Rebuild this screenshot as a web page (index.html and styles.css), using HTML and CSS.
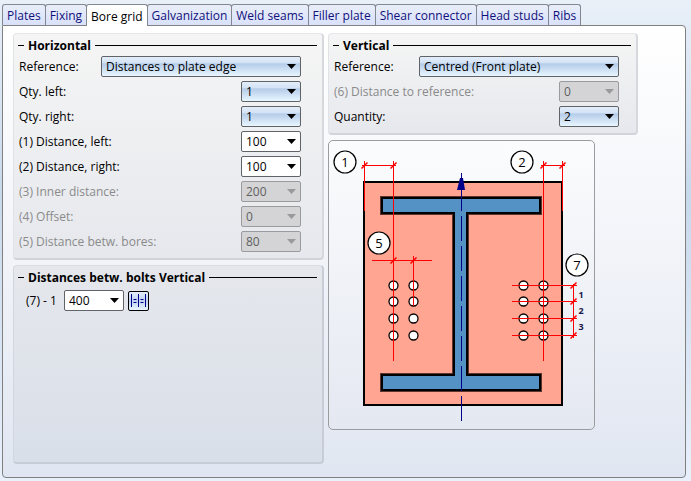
FILE: index.html
```html
<!DOCTYPE html>
<html lang="en">
<head>
<meta charset="utf-8">
<title>Bore grid</title>
<link rel="stylesheet" href="styles.css">
</head>
<body>
<nav class="tabs" role="tablist">
  <button class="tab" role="tab">Plates</button>
  <button class="tab" role="tab">Fixing</button>
  <button class="tab tab-active" role="tab" aria-selected="true">Bore grid</button>
  <button class="tab" role="tab">Galvanization</button>
  <button class="tab" role="tab">Weld seams</button>
  <button class="tab" role="tab">Filler plate</button>
  <button class="tab" role="tab">Shear connector</button>
  <button class="tab" role="tab">Head studs</button>
  <button class="tab" role="tab">Ribs</button>
</nav>
<main class="panel">
  <div class="column">
    <section class="group">
      <h2 class="heading">Horizontal</h2>
      <div class="rows">
        <div class="row"><label for="h-ref">Reference:</label><span class="combo combo-wide"><select id="h-ref"><option>Distances to plate edge</option></select></span></div>
        <div class="row"><label for="qty-left">Qty. left:</label><span class="combo"><select id="qty-left"><option>1</option></select></span></div>
        <div class="row"><label for="qty-right">Qty. right:</label><span class="combo"><select id="qty-right"><option>1</option></select></span></div>
        <div class="row"><label for="dist-left">(1) Distance, left:</label><span class="combo combo-edit"><select id="dist-left"><option>100</option></select></span></div>
        <div class="row"><label for="dist-right">(2) Distance, right:</label><span class="combo combo-edit"><select id="dist-right"><option>100</option></select></span></div>
        <div class="row row-off"><label for="inner">(3) Inner distance:</label><span class="combo"><select id="inner" disabled><option>200</option></select></span></div>
        <div class="row row-off"><label for="offset">(4) Offset:</label><span class="combo"><select id="offset" disabled><option>0</option></select></span></div>
        <div class="row row-off"><label for="bores">(5) Distance betw. bores:</label><span class="combo"><select id="bores" disabled><option>80</option></select></span></div>
      </div>
    </section>
    <section class="group group-fill">
      <h2 class="heading">Distances betw. bolts Vertical</h2>
      <div class="bolt">
        <label for="bolt-1">(7) - 1</label>
        <span class="combo combo-edit"><select id="bolt-1"><option>400</option></select></span>
        <button class="equal" aria-label="Equal distances">
          <svg width="17" height="15" viewBox="0 0 17 15" fill="none" stroke="#00008b">
            <path d="M1.5 1v13M8.500 1v13M15.500 1v13M3.500 6.500h3M3.500 9.500h3M10.500 6.500h3M10.500 9.500h3"/>
          </svg>
        </button>
      </div>
    </section>
  </div>
  <div class="column">
    <section class="group">
      <h2 class="heading">Vertical</h2>
      <div class="rows rows-vertical">
        <div class="row"><label for="v-ref">Reference:</label><span class="combo combo-wide"><select id="v-ref"><option>Centred (Front plate)</option></select></span></div>
        <div class="row row-off"><label for="v-dist">(6) Distance to reference:</label><span class="combo"><select id="v-dist" disabled><option>0</option></select></span></div>
        <div class="row"><label for="quantity">Quantity:</label><span class="combo"><select id="quantity"><option>2</option></select></span></div>
      </div>
    </section>
    <figure class="drawing">
      <svg width="265" height="288" viewBox="329 141 265 288" role="img" aria-label="Plate with bore grid">
        <rect x="364" y="182" width="198" height="223" fill="#ffa591" stroke="#000" stroke-width="2"/>
        <path d="M382 198H540V213H467V375H540V390H382V375H454V213H382Z" fill="#5492c5" stroke="#5b342d" stroke-width="4"/>
        <path d="M382 198H540V213H467V375H540V390H382V375H454V213H382Z" fill="#5492c5" stroke="#000" stroke-width="2"/>
        <path d="M461.500 173v13" stroke="#00008b"/>
        <path d="M461.500 186V421" stroke="#00008b" stroke-dasharray="25 5"/>
        <path d="M460 178h3l2 12h-8z" fill="#00008b"/>
        <g fill="#fff" stroke="#000" stroke-width="1.300">
          <circle cx="393.500" cy="285.500" r="4.500"/><circle cx="393.500" cy="301.500" r="4.500"/><circle cx="393.500" cy="318.500" r="4.500"/><circle cx="393.500" cy="335.500" r="4.500"/>
          <circle cx="413.500" cy="285.500" r="4.500"/><circle cx="413.500" cy="301.500" r="4.500"/><circle cx="413.500" cy="318.500" r="4.500"/><circle cx="413.500" cy="335.500" r="4.500"/>
          <circle cx="523.500" cy="285.500" r="4.500"/><circle cx="523.500" cy="301.500" r="4.500"/><circle cx="523.500" cy="318.500" r="4.500"/><circle cx="523.500" cy="335.500" r="4.500"/>
          <circle cx="543.500" cy="285.500" r="4.500"/><circle cx="543.500" cy="301.500" r="4.500"/><circle cx="543.500" cy="318.500" r="4.500"/><circle cx="543.500" cy="335.500" r="4.500"/>
        </g>
        <g stroke="#f00" fill="none">
          <path d="M364.500 161v50M393.500 161v200M543.500 161v200M562.500 161v50M413.500 256v50M573.500 284v54"/>
          <path d="M362 165.500h34M541 165.500h24M372 260.500h60M512 285.500h65M512 301.500h65M512 318.500h65M512 335.500h65"/>
          <path stroke-width="1.500" d="M361.500 168.500l6-6M390.500 168.500l6-6M540.500 168.500l6-6M559.500 168.500l6-6M390.500 263.500l6-6M410.500 263.500l6-6M570.500 288.500l6-6M570.500 304.500l6-6M570.500 321.500l6-6M570.500 338.500l6-6"/>
        </g>
        <g fill="#fff" stroke="#000" stroke-width="1.200">
          <circle cx="345" cy="162" r="11"/><circle cx="522" cy="162" r="11"/><circle cx="379" cy="243" r="11"/><circle cx="577" cy="265" r="11"/>
        </g>
        <g class="callout">
          <text x="345" y="167">1</text><text x="522" y="167">2</text><text x="379" y="248">5</text><text x="577" y="270">7</text>
        </g>
        <g class="spacing">
          <text x="581" y="298">1</text><text x="581" y="314">2</text><text x="581" y="330">3</text>
        </g>
      </svg>
    </figure>
  </div>
</main>
</body>
</html>
```
FILE: styles.css
```css
* { box-sizing: border-box; }

body {
  margin: 0;
  min-height: 100vh;
  padding: 4px 5px 3px 2px;
  display: flex;
  flex-direction: column;
  background: linear-gradient(#e9f0f8, #c8d9ec 40%, #e8f0fb);
  color: #000;
  font: 12px/16px "Open Sans", "Noto Sans", sans-serif;
}

button, select { font: inherit; color: inherit; }

.tabs { display: flex; }

.tab {
  height: 21px;
  margin: 0 -1px 0 0;
  padding: 2px 4px 0;
  border: 1px solid #828790;
  border-bottom: 0;
  border-radius: 3px 3px 0 0;
  background: linear-gradient(#e9eef8, #d9e1fb);
  color: #10107a;
  white-space: nowrap;
}

.tab-active {
  position: relative;
  height: 22px;
  margin-bottom: -1px;
  background: #fff;
  color: #000;
}

.panel {
  flex: 1;
  display: grid;
  grid-template-columns: minmax(0, 311px) minmax(0, 310px);
  gap: 4px;
  padding: 7px 10px 13px;
  border: 1px solid #808080;
  border-radius: 0 4px 4px 4px;
  background: linear-gradient(#fff, #f2f4f9 50%, #e0e6f1);
}

.column { display: flex; flex-direction: column; gap: 5px; }

.group {
  padding: 3px 5px 6px 4px;
  border: 1px solid #e2e4e8;
  border-width: 1px 2px 2px 1px;
  border-radius: 4px;
  border-color: #e6e7ea #d6d8de #d0d3da #e0e2e6;
  background: linear-gradient(#f5f5f5, #e6e8ed);
}

.group-fill { flex: 1; background: linear-gradient(#e5e7ec, #d9dfe9); border-color: #d8dbe1 #c8ccd6 #c8ccd6 #d2d6de; }

.heading {
  display: flex;
  align-items: center;
  gap: 4px;
  margin: 0 0 2px;
  font-size: 12px;
  line-height: 17px;
  font-weight: 700;
}

.heading::before, .heading::after { content: ""; height: 1px; background: #000; }
.heading::before { width: 6px; }
.heading::after { flex: 1; }

.rows { display: grid; gap: 4px; padding: 0 16px 0 1px; }
.rows-vertical { padding-right: 12px; }
.row { display: flex; justify-content: space-between; align-items: center; height: 21px; }
.row-off { color: #8a8a8a; }

.combo { display: grid; align-items: center; width: 60px; }
.combo-wide { width: 200px; }

.combo select {
  grid-area: 1 / 1;
  appearance: none;
  width: 100%;
  height: 21px;
  padding: 0 16px 0 4px;
  border: 1px solid #606468;
  border-radius: 2px;
  background: linear-gradient(#e4eefa, #d3e2f5 30%, #b5cce9 36%, #e8f6ff);
}

.combo::after {
  content: "";
  grid-area: 1 / 1;
  justify-self: end;
  width: 9px;
  height: 5px;
  margin-right: 5px;
  background: #000;
  clip-path: polygon(0 0, 100% 0, 50% 100%);
  pointer-events: none;
}

.combo-edit select { background: #fff; }
.combo select:disabled { background: #d4d4d6; border-color: #9b9b9e; color: #606060; opacity: 1; }
.row-off .combo::after { background: #999; }

.bolt { display: flex; align-items: center; gap: 4px; padding: 2px 8px; }
.bolt label { width: 34px; white-space: nowrap; }

.equal {
  display: grid;
  place-items: center;
  width: 21px;
  height: 20px;
  padding: 0;
  border: 1px solid #000;
  border-radius: 2px;
  background: linear-gradient(#e4eefa, #bcd2ee 50%, #e8f6ff);
}

.drawing {
  align-self: flex-start;
  margin: 0;
  border: 1px solid #9a9c9f;
  border-radius: 5px;
  background: linear-gradient(#fbfcfd, #e4e8f1);
}

.drawing svg { display: block; }
.callout { font-size: 13px; text-anchor: middle; }
.spacing { font-size: 9px; font-weight: 700; fill: #1a1a4a; text-anchor: middle; }
```
